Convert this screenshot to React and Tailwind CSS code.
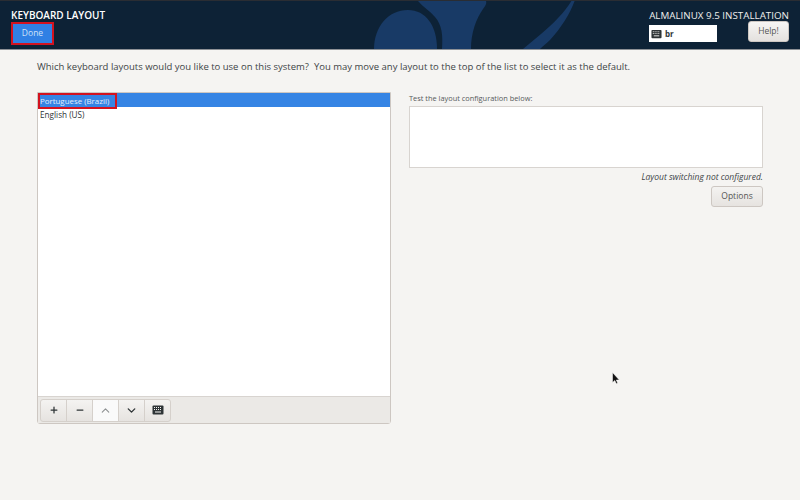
import { Plus, Minus, ChevronUp, ChevronDown } from 'lucide-react';

function KeyboardIcon({ className }) {
  return (
    <svg viewBox="0 0 12 10" className={className}>
      <rect x="0.5" y="0.5" width="11" height="9" rx="1" fill="#2e3436" />
      <path d="M2 2.5h8M2 4.5h8" stroke="#f5f4f2" strokeWidth="1" strokeDasharray="1 1" />
      <path d="M3 7h6" stroke="#f5f4f2" strokeWidth="1" />
    </svg>
  );
}

function ToolButton({ children, disabled, last }) {
  return (
    <button
      className={`w-[27px] h-[23px] flex items-center justify-center border border-[#d5d0cb] -ml-px first:ml-0 first:rounded-l-[3px] ${
        last ? 'rounded-r-[3px]' : ''
      } ${disabled ? 'bg-[#fafafa] text-[#8e9192]' : 'bg-gradient-to-b from-[#f4f3f1] to-[#e6e3e0] text-[#2e3436]'}`}
    >
      {children}
    </button>
  );
}

export default function App() {
  return (
    <div className="relative w-[800px] h-[500px] overflow-hidden bg-[#f5f4f2] text-[#2e3436] font-['Open_Sans',sans-serif]">
      {/* Header */}
      <div className="relative h-[50px] overflow-hidden bg-[#0d2236] border-t border-[#2a2d33] border-b border-b-[#8d9196] flex justify-between pl-[11px] pr-[11px]">
        <svg viewBox="0 0 800 50" className="absolute left-0 top-[-1px] w-[800px] h-[50px]">
          <path d="M374 49c0-22 14-39 34-39 18 0 29 16 29 39z" fill="#183a66" />
          <path d="M418 1h68c1 3-1 5-3 8-7 10-12 24-12 40h-29c1-14 0-24-7-32-5-6-12-10-17-16z" fill="#183a66" />
          <path d="M523 49c6-5 12-10 18-15 13-11 24-22 31-34h3c-5 14-14 28-25 40-3 3-7 6-10 9z" fill="#183a66" />
        </svg>
        <div className="relative">
          <div className="text-[10px] leading-[14px] mt-[7px] font-semibold text-white">KEYBOARD LAYOUT</div>
          <button className="block mt-[0px] w-[43px] h-[23px] border-[2px] border-[#d3121f] bg-[#3080e4] text-[8.5px] text-[#cfe2f8]">
            Done
          </button>
        </div>
        <div className="relative flex flex-col items-end">
          <div className="text-[9.8px] leading-[14px] mt-[8px] text-[#eeeeec]">ALMALINUX 9.5 INSTALLATION</div>
          <div className="flex items-start gap-[31px] mt-[-2px]">
            <div className="w-[68px] h-[17px] mt-[4px] bg-white flex items-center pl-[2px] gap-[3px]">
              <KeyboardIcon className="w-[11px] h-[10px]" />
              <span className="text-[8px] font-bold text-[#2e3436]">br</span>
            </div>
            <button className="w-[41px] h-[21px] rounded-[3px] border border-[#cdc7c2] bg-gradient-to-b from-[#f6f5f4] to-[#e4e1de] text-[8.5px] text-[#555]">
              Help!
            </button>
          </div>
        </div>
      </div>

      {/* Body */}
      <div className="px-[37px] pt-[10px]">
        <p className="text-[9.5px] leading-[14px] text-[#3d4446]">
          Which keyboard layouts would you like to use on this system?&nbsp; You may move any layout to the top of the list to select it as the default.
        </p>
        <div className="flex mt-[18px]">
          <div className="w-[354px] h-[332px] border border-[#cdc7c2] rounded-b-[3px] bg-white flex flex-col">
            <div className="flex-1 text-[8.2px] leading-[15px]">
              <div className="bg-[#3584e4] text-[#e4eefb] h-[14px] flex items-start">
                <span className="h-[16px] w-[79px] border-[2px] border-[#d3121f] text-[7.9px] leading-[12px] whitespace-nowrap">Portuguese (Brazil)</span>
              </div>
              <div className="pl-[2px]">English (US)</div>
            </div>
            <div className="h-[27px] bg-[#ebe9e6] border-t border-[#d8d4d0] flex items-center pl-[2px]">
              <ToolButton><Plus className="w-[10px] h-[10px]" strokeWidth={3} /></ToolButton>
              <ToolButton><Minus className="w-[10px] h-[10px]" strokeWidth={3} /></ToolButton>
              <ToolButton disabled><ChevronUp className="w-[13px] h-[13px]" strokeWidth={2} /></ToolButton>
              <ToolButton><ChevronDown className="w-[13px] h-[13px]" strokeWidth={2.5} /></ToolButton>
              <ToolButton last><KeyboardIcon className="w-[12px] h-[10px]" /></ToolButton>
            </div>
          </div>
          <div className="ml-[18px] w-[354px] flex flex-col">
            <div className="text-[7.4px] leading-[12px] text-[#555a5c]">Test the layout configuration below:</div>
            <div className="mt-[2px] h-[62px] bg-white border border-[#d8d4d0]"></div>
            <div className="mt-[3px] text-[8.5px] leading-[12px] italic text-right text-[#3d4446]">Layout switching not configured.</div>
            <button className="self-end mt-[3px] w-[52px] h-[21px] rounded-[3px] border border-[#cdc7c2] bg-gradient-to-b from-[#f4f3f1] to-[#e6e3e0] text-[8.5px] text-[#555]">
              Options
            </button>
          </div>
        </div>
      </div>

      {/* Mouse pointer */}
      <svg viewBox="0 0 8 12" className="absolute left-[612px] top-[372px] w-[8px] h-[12px]">
        <path d="M0.5 0.5v10l2.3-2 1.5 3.2 1.4-.6-1.4-3.1h3z" fill="#111" stroke="#fff" strokeWidth="0.5" />
      </svg>
    </div>
  );
}
